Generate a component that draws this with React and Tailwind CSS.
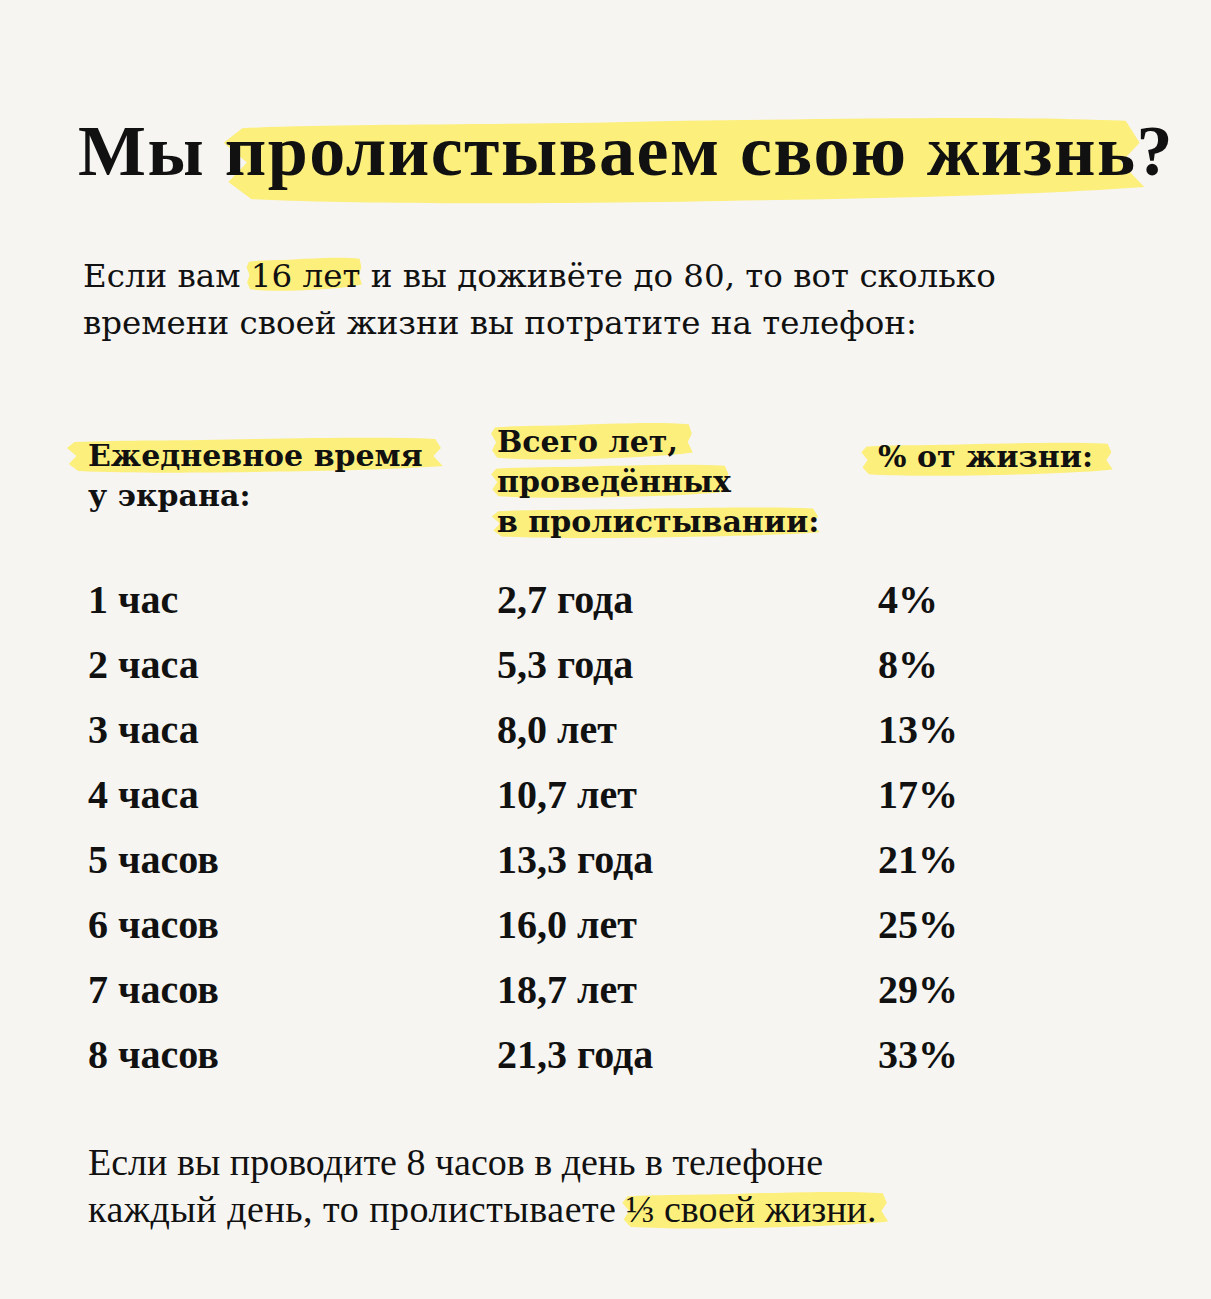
import React from "react";

const serif = "font-['DejaVu_Serif','Liberation_Serif',serif]";
const narrow = "font-['Liberation_Serif','DejaVu_Serif',serif]";

// brush stroke drawn behind the highlighted words
const Brush = ({ className }) => (
  <span className={"absolute -z-10 block " + className}>
    <svg className="block h-full w-full" viewBox="0 0 200 40" preserveAspectRatio="none" aria-hidden="true">
      <path
        d="M5,7 C30,5 60,6 100,4 C140,3 170,2 195,4 L198,13 L194,21 L199,31 C170,35 130,36 100,37 C60,38 30,38 7,36 L2,29 L6,21 L1,13 Z"
        fill="#fcef7c"
      />
    </svg>
  </span>
);

const Mark = ({ children, brush }) => (
  <span className="relative inline-block">
    <Brush className={brush} />
    {children}
  </span>
);

const rows = [
  ["1 час", "2,7 года", "4%"],
  ["2 часа", "5,3 года", "8%"],
  ["3 часа", "8,0 лет", "13%"],
  ["4 часа", "10,7 лет", "17%"],
  ["5 часов", "13,3 года", "21%"],
  ["6 часов", "16,0 лет", "25%"],
  ["7 часов", "18,7 лет", "29%"],
  ["8 часов", "21,3 года", "33%"],
];

const App = () => {
  return (
    <div className="isolate min-h-[1299px] w-[1211px] overflow-hidden bg-[#f6f5f2] pl-[78px] pt-[115px] text-[#111]">
      <h1 className={narrow + " whitespace-nowrap text-[72px] font-bold leading-[72px] tracking-[1.5px]"}>
        Мы{" "}
        <Mark brush="-left-[6px] -right-[12px] -top-[4px] -bottom-[22px]">пролистываем свою жизнь</Mark>
        <span className="relative">?</span>
      </h1>

      <p className={serif + " ml-[5px] mt-[66px] text-[32.5px] leading-[47px]"}>
        Если вам <Mark brush="-left-[5px] -right-[2px] top-[2px] bottom-[7px]">16 лет</Mark> и вы
        доживёте до 80, то вот сколько
        <br />
        времени своей жизни вы потратите на телефон:
      </p>

      <div className="ml-[10px] mt-[75px] grid grid-cols-[409px_381px_1fr]">
        <div className={serif + " pt-[14px] text-[30px] font-bold leading-[40px]"}>
          <Mark brush="-left-[23px] -right-[22px] -top-[1px] bottom-[1px]">Ежедневное время</Mark>
          <br />
          у экрана:
        </div>
        <div className={serif + " text-[30px] font-bold leading-[40px]"}>
          <Mark brush="-left-[7px] -right-[16px] -top-[2px] bottom-0">Всего лет,</Mark>
          <br />
          <Mark brush="-left-[7px] right-0 top-0 bottom-[2px]">проведённых</Mark>
          <br />
          <Mark brush="-left-[7px] -right-[2px] top-[3px] bottom-[2px]">в пролистывании:</Mark>
        </div>
        <div className={serif + " pt-[15px] text-[30px] font-bold leading-[40px]"}>
          <Mark brush="-left-[18px] -right-[21px] top-[3px] -bottom-[1px]">% от жизни:</Mark>
        </div>

        <div className="col-span-3 mt-[25px]">
          {rows.map((r) => (
            <div
              key={r[0]}
              className={narrow + " grid grid-cols-[409px_381px_1fr] text-[40px] font-bold leading-[65px]"}
            >
              <span>{r[0]}</span>
              <span>{r[1]}</span>
              <span>{r[2]}</span>
            </div>
          ))}
        </div>

        <p className={narrow + " col-span-3 mt-[52px] text-[38px] leading-[47px]"}>
          Если вы проводите 8 часов в день в телефоне
          <br />
          <span className="tracking-[0.5px]">каждый день, то пролистываете</span>{" "}
          <Mark brush="-left-[5px] -right-[13px] top-[3px] bottom-[2px]">⅓ своей жизни.</Mark>
        </p>
      </div>
    </div>
  );
};

export default App;
